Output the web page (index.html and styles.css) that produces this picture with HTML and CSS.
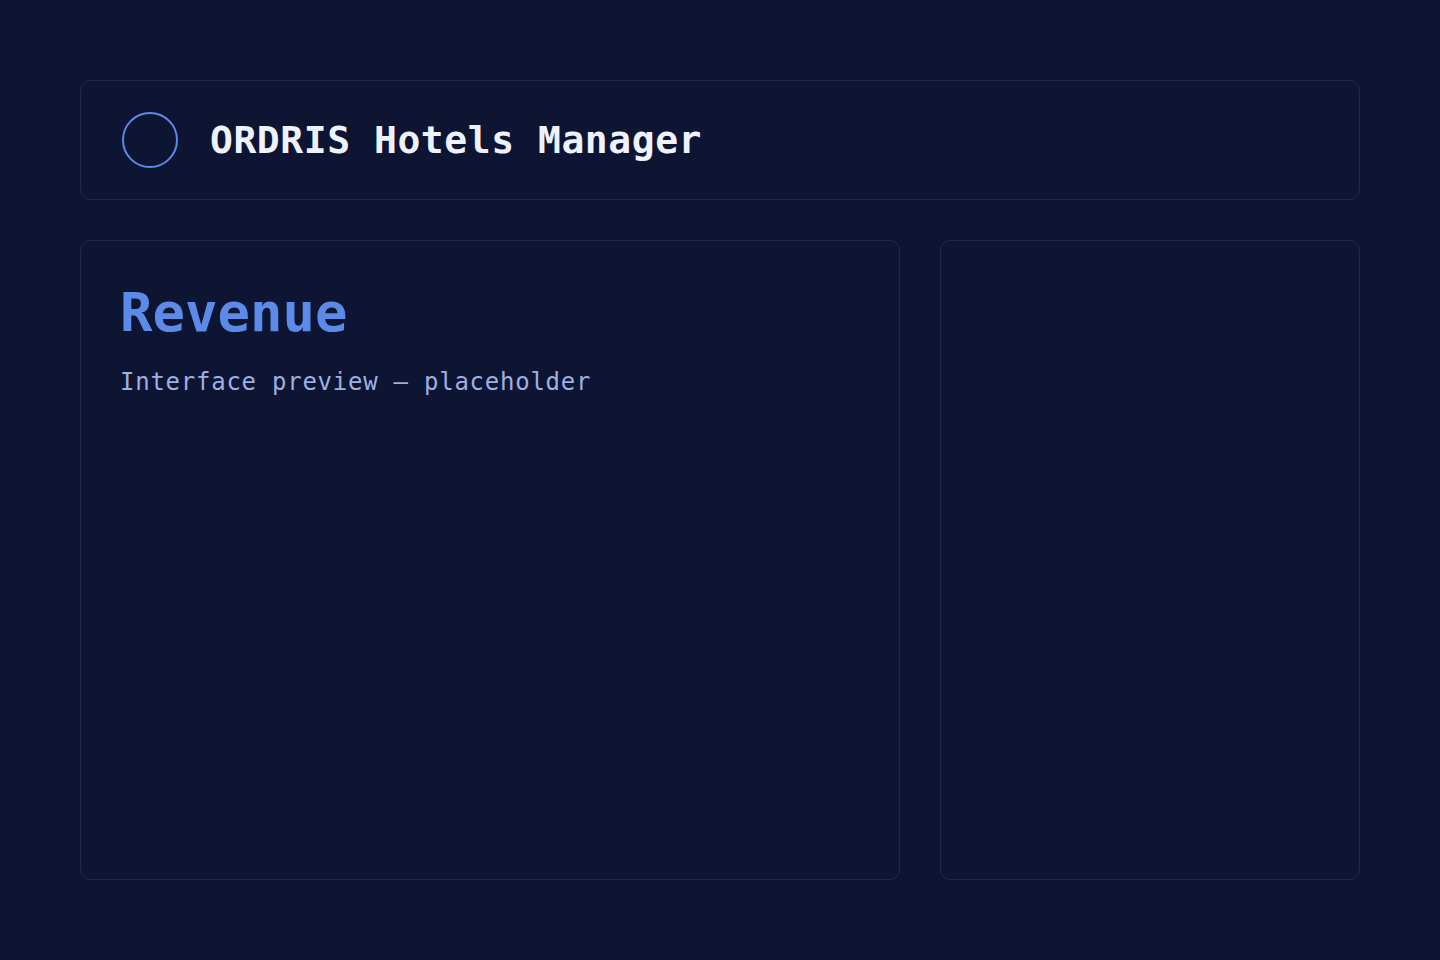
FILE: index.html
```html
<!DOCTYPE html>
<html lang="en">
<head>
    <title>ORDRIS Hotels Manager</title>
    <link rel="stylesheet" href="styles.css">
</head>
<body>
    <header class="topbar">
        <div class="logo"></div>
        <h1>ORDRIS Hotels Manager</h1>
    </header>
    <main class="layout">
        <section class="panel main-panel">
            <h2>Revenue</h2>
            <p class="sub">Interface preview — placeholder</p>
        </section>
        <aside class="panel side-panel"></aside>
    </main>
</body>
</html>
```

FILE: styles.css
```css
* {
    margin: 0;
    padding: 0;
    box-sizing: border-box;
}
body {
    background: #0e1532;
    color: #eef2ff;
    font-family: "DejaVu Sans Mono", "Liberation Mono", monospace;
    padding: 80px;
    height: 960px;
    overflow: hidden;
}
.panel,
.topbar {
    border: 1px solid #1f284b;
    border-radius: 10px;
    background: #0e1532;
}
.topbar {
    height: 120px;
    display: flex;
    align-items: center;
    gap: 32px;
    padding: 0 41px;
    margin-bottom: 40px;
}
.logo {
    width: 56px;
    height: 56px;
    border: 2px solid #5b8ae8;
    border-radius: 50%;
    flex-shrink: 0;
}
h1 {
    font-size: 38px;
    font-weight: 700;
    color: #eef2ff;
    letter-spacing: 0.55px;
}
.layout {
    display: grid;
    grid-template-columns: 820px 420px;
    gap: 40px;
    height: 640px;
}
.main-panel {
    padding: 40px 39px;
}
h2 {
    font-size: 54px;
    font-weight: 700;
    color: #5b8ae8;
    line-height: 63px;
}
.sub {
    margin-top: 24px;
    font-size: 24px;
    line-height: 28px;
    color: #9eb0e2;
    letter-spacing: 0.75px;
}
```
